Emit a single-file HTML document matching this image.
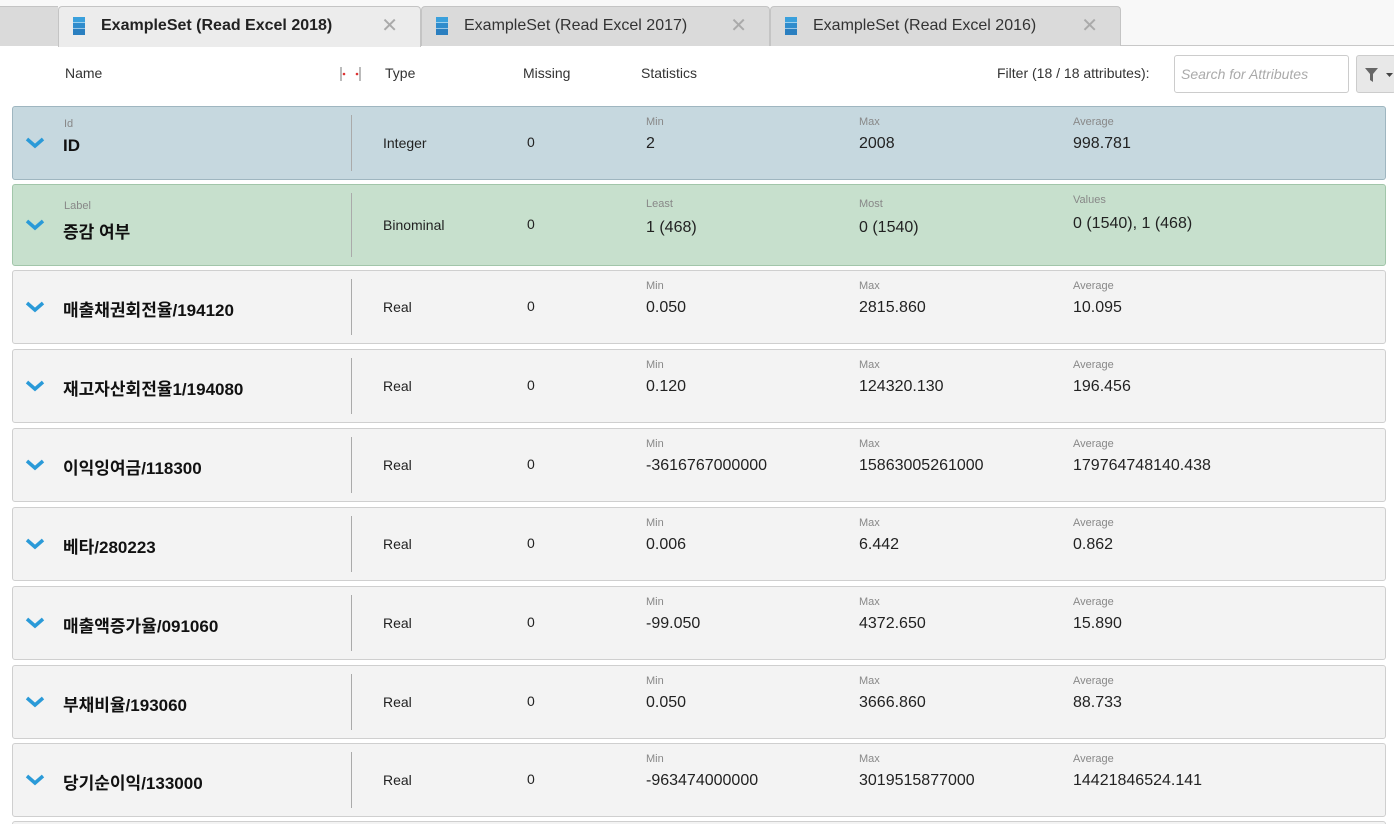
<!DOCTYPE html>
<html style="overflow:hidden;height:824px"><head><meta charset="utf-8"><style>
*{margin:0;padding:0;box-sizing:border-box}
body{width:1394px;height:824px;background:#fff;font-family:"Liberation Sans","Noto Sans CJK KR",sans-serif;position:relative;overflow:hidden;color:#222}
.top{position:absolute;left:0;top:0;width:1394px;height:46px;background:#f8f8f8;border-bottom:1px solid #c8c8c8}
.tab{position:absolute;top:6px;height:40px;background:#dadada;border:1px solid #c4c4c4;border-bottom:none;border-radius:4px 4px 0 0;font-size:16px;line-height:38px;color:#333}
.tab.act{background:#ececec;font-weight:bold;color:#222;height:41px}
.ic{position:absolute;left:14px;top:10px;width:12px;height:18px;background:linear-gradient(#3aa0dc 0 30%,#fff 30% 34%,#2f8ccc 34% 64%,#fff 64% 68%,#2a7fc0 68%)}
.tab .t{position:absolute;left:42px}
.tab .x{position:absolute;right:22px;color:#aaa;font-weight:normal;font-size:20px}
.hdr{position:absolute;top:65px;font-size:14px;color:#333}
.row{position:absolute;left:12px;width:1374px;border:1px solid #cfcfcf;border-radius:3px;background:#f3f3f3}
.row.b{background:#c6d8df;border-color:#9fb6c0}
.row.g{background:#c7e0cd;border-color:#a2c6aa}
.chev{position:absolute;left:12px;width:20px;height:12px}
.sep{position:absolute;left:338px;top:8px;bottom:8px;width:1px;background:#aaa}
.sm{position:absolute;font-size:11px;color:#888}
.v{position:absolute;font-size:16px;color:#222}
.nm{position:absolute;left:50px;font-size:17px;font-weight:bold;color:#111}
.ty{position:absolute;left:370px;font-size:14px}
.ms{position:absolute;left:514px;font-size:14px}
</style></head><body>
<div class="top"></div>
<div style="position:absolute;left:0;top:6px;width:58px;height:40px;background:#dadada;border-top:1px solid #c4c4c4"></div>
<div class="tab act" style="left:58px;width:363px"><div class="ic"></div><span class="t">ExampleSet (Read Excel 2018)</span><span class="x">✕</span></div>
<div class="tab" style="left:421px;width:349px"><div class="ic"></div><span class="t">ExampleSet (Read Excel 2017)</span><span class="x">✕</span></div>
<div class="tab" style="left:770px;width:351px"><div class="ic"></div><span class="t">ExampleSet (Read Excel 2016)</span><span class="x">✕</span></div>
<div class="hdr" style="left:65px">Name</div>
<div style="position:absolute;left:340px;top:66px;width:22px;height:16px">
<svg width="22" height="16"><line x1="1" y1="1" x2="1" y2="15" stroke="#777"/><line x1="20" y1="1" x2="20" y2="15" stroke="#777"/><circle cx="4" cy="8" r="1.3" fill="#d33"/><circle cx="17" cy="8" r="1.3" fill="#d33"/></svg></div>
<div class="hdr" style="left:385px">Type</div>
<div class="hdr" style="left:523px">Missing</div>
<div class="hdr" style="left:641px">Statistics</div>
<div class="hdr" style="left:997px">Filter (18 / 18 attributes):</div>
<div style="position:absolute;left:1174px;top:55px;width:175px;height:38px;border:1px solid #ccc;border-radius:3px;background:#fff;font-style:italic;color:#aaa;font-size:14px;line-height:36px;padding-left:6px">Search for Attributes</div>
<div style="position:absolute;left:1356px;top:55px;width:40px;height:38px;border:1px solid #ccc;border-radius:3px;background:#e8e8e8">
<svg width="40" height="38"><path d="M8 12h13l-5 6v8l-3-2v-6z" fill="#666"/><path d="M29 17h7l-3.5 4z" fill="#444"/></svg></div>

<div id="rows"></div>
<script>
var rows=[
["b",106,74,"Id","ID","Integer","Min","2","Max","2008","Average","998.781"],
["g",184,82,"Label","증감 여부","Binominal","Least","1 (468)","Most","0 (1540)","Values","0 (1540), 1 (468)"],
["",270,74,"","매출채권회전율/194120","Real","Min","0.050","Max","2815.860","Average","10.095"],
["",349,74,"","재고자산회전율1/194080","Real","Min","0.120","Max","124320.130","Average","196.456"],
["",428,74,"","이익잉여금/118300","Real","Min","-3616767000000","Max","15863005261000","Average","179764748140.438"],
["",507,74,"","베타/280223","Real","Min","0.006","Max","6.442","Average","0.862"],
["",586,74,"","매출액증가율/091060","Real","Min","-99.050","Max","4372.650","Average","15.890"],
["",665,74,"","부채비율/193060","Real","Min","0.050","Max","3666.860","Average","88.733"],
["",743,74,"","당기순이익/133000","Real","Min","-963474000000","Max","3019515877000","Average","14421846524.141"]];
var h="";
rows.forEach(function(r){
var H=r[2],mid=Math.round(H/2);
var nmTop=r[3]?mid-8:mid-12;
h+='<div class="row '+r[0]+'" style="top:'+r[1]+'px;height:'+H+'px">';
h+='<svg class="chev" style="top:'+(mid-7)+'px" viewBox="0 0 20 12"><path d="M2 2l8 7 8-7" fill="none" stroke="#2a9ad8" stroke-width="3.5"/></svg>';
if(r[3])h+='<div class="sm" style="left:51px;top:'+(mid-26)+'px">'+r[3]+'</div>';
h+='<div class="nm" style="top:'+nmTop+'px">'+r[4]+'</div><div class="sep"></div>';
h+='<div class="ty" style="top:'+(mid-9)+'px">'+r[5]+'</div>';
h+='<div class="ms" style="top:'+(mid-10)+'px">0</div>';
var g=r[0]=="g";
[[633,6],[846,8],[1060,10]].forEach(function(c,i){
var off=(g&&i==2)?-4:0;
h+='<div class="sm" style="left:'+c[0]+'px;top:'+(mid-28+off)+'px">'+r[c[1]]+'</div>';
h+='<div class="v" style="left:'+c[0]+'px;top:'+(mid-9+off+(g?2:0))+'px">'+r[c[1]+1]+'</div>';});
h+='</div>';});
h+='<div class="row" style="top:821px;height:20px"></div>';
document.getElementById("rows").innerHTML=h;
</script>
</body></html>
